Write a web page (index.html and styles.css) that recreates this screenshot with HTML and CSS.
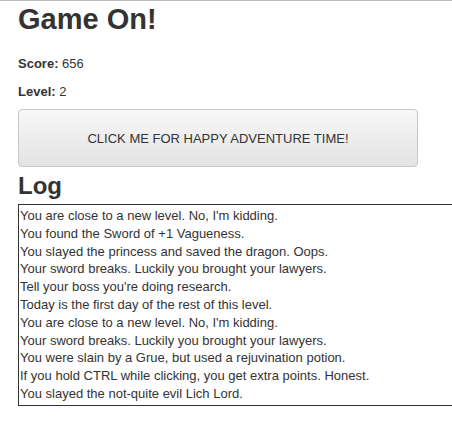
FILE: index.html
```html
<!DOCTYPE html>
<html>
<head>
<meta charset="utf-8">
<link rel="stylesheet" href="styles.css">
</head>
<body>
<div class="page">
  <h1 class="title">Game On!</h1>
  <p class="stat"><b>Score:</b> 656</p>
  <p class="stat"><b>Level:</b> 2</p>
  <button class="action">CLICK ME FOR HAPPY ADVENTURE TIME!</button>
  <h2 class="log-title">Log</h2>
  <div class="log">
    <div>You are close to a new level. No, I'm kidding.</div>
    <div>You found the Sword of +1 Vagueness.</div>
    <div>You slayed the princess and saved the dragon. Oops.</div>
    <div>Your sword breaks. Luckily you brought your lawyers.</div>
    <div>Tell your boss you're doing research.</div>
    <div>Today is the first day of the rest of this level.</div>
    <div>You are close to a new level. No, I'm kidding.</div>
    <div>Your sword breaks. Luckily you brought your lawyers.</div>
    <div>You were slain by a Grue, but used a rejuvination potion.</div>
    <div>If you hold CTRL while clicking, you get extra points. Honest.</div>
    <div>You slayed the not-quite evil Lich Lord.</div>
  </div>
</div>
</body>
</html>
```
FILE: styles.css
```css
html, body {
  margin: 0;
  padding: 0;
  background: #fff;
}
body {
  border-top: 1px solid #bdbdc2;
  font-family: "Liberation Sans", Arial, sans-serif;
  color: #333;
  overflow: hidden;
}
.page {
  padding: 0 0 0 18px;
  overflow: hidden;
}
.title {
  font-size: 29px;
  font-weight: bold;
  margin: 0;
  height: 49px;
  line-height: 36px;
}
.stat {
  font-size: 13px;
  margin: 0;
  height: 28px;
  line-height: 28px;
}
.stat b {
  font-weight: bold;
}
.action {
  display: block;
  box-sizing: border-box;
  width: 400px;
  height: 58px;
  margin: 3px 0 0 0;
  border: 1px solid #c8c8c8;
  border-radius: 4px;
  background: linear-gradient(#f8f8f8, #e3e3e3);
  font-family: "Liberation Sans", Arial, sans-serif;
  font-size: 13px;
  color: #333;
  padding: 0;
}
.log-title {
  font-size: 24px;
  font-weight: bold;
  margin: 0;
  height: 37px;
  line-height: 38px;
}
.log {
  border: 1px solid #333;
  border-right: none;
  padding: 2px 0 2px 1px;
  font-size: 13px;
  line-height: 17.8px;
  color: #333;
}
```
